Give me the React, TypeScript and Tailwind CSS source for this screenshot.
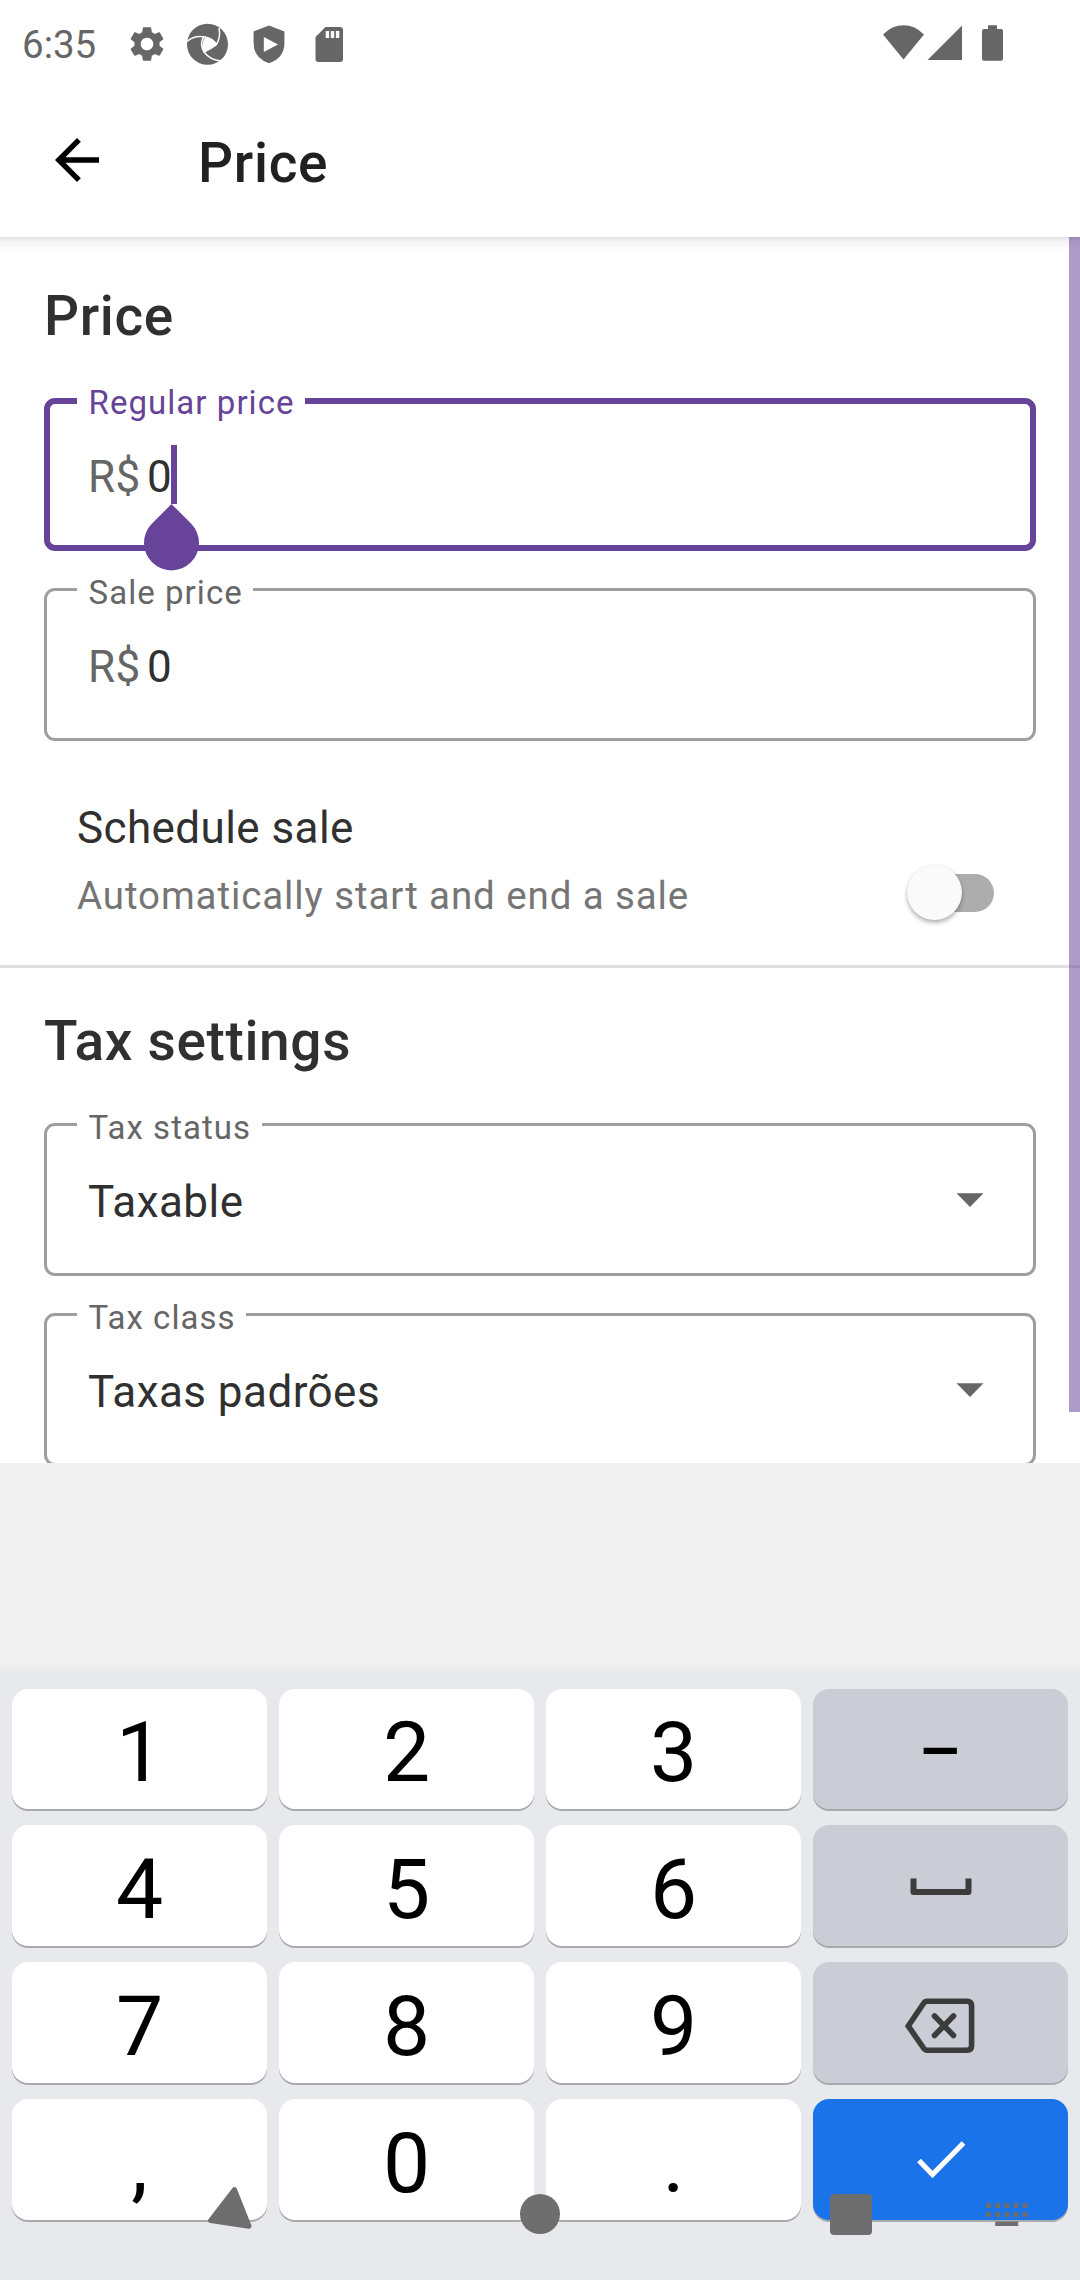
import type { ReactNode } from "react";

function StatusBar() {
  return (
    <div className="flex h-[83px] items-start justify-between pt-[22px] pl-[22px] pr-[77px] text-[#666666]">
      <div className="flex items-center">
        <span className="w-[103.5px] pt-[2px] text-[38.5px] leading-[42px]">6:35</span>
        <svg className="h-[42px] w-[42px] -mt-px" viewBox="0 0 24 24" fill="currentColor">
          <path d="M19.14 12.94c.04-.3.06-.61.06-.94 0-.32-.02-.64-.07-.94l2.03-1.58c.18-.14.23-.41.12-.61l-1.92-3.32c-.12-.22-.37-.29-.59-.22l-2.39.96c-.5-.38-1.03-.7-1.62-.94l-.36-2.54c-.04-.24-.24-.41-.48-.41h-3.84c-.24 0-.43.17-.47.41l-.36 2.54c-.59.24-1.13.57-1.62.94l-2.39-.96c-.22-.08-.47 0-.59.22L2.74 8.87c-.12.21-.08.47.12.61l2.03 1.58c-.05.3-.09.63-.09.94s.02.64.07.94l-2.03 1.58c-.18.14-.23.41-.12.61l1.92 3.32c.12.22.37.29.59.22l2.39-.96c.5.38 1.03.7 1.62.94l.36 2.54c.05.24.24.41.48.41h3.84c.24 0 .44-.17.47-.41l.36-2.54c.59-.24 1.13-.56 1.62-.94l2.39.96c.22.08.47 0 .59-.22l1.92-3.32c.12-.22.07-.47-.12-.61l-2.01-1.58zM12 15.6c-1.98 0-3.6-1.62-3.6-3.6s1.62-3.6 3.6-3.6 3.6 1.62 3.6 3.6-1.62 3.6-3.6 3.6z" />
        </svg>
        <svg className="-mt-px ml-[19.5px] h-[42px] w-[42px]" viewBox="0 0 42 42">
          <circle cx="20.5" cy="21.300" r="20.5" fill="currentColor" />
          <path d="M18 14.500Q27 14 29.500 22Q23 25 17 29Q13 22 18 14.500Z" fill="white" />
          <g fill="none" stroke="white" strokeWidth="1.5">
            <path d="M0 18.500Q7 12 18 14Q27 16 29.500 22" />
            <path d="M32 5Q34 15 29 22Q24 26 17 29" />
            <path d="M17 13.500Q12 21 17 29Q23 37 34 38" />
          </g>
        </svg>
        <svg className="-mt-px ml-[24px] h-[42px] w-[32px]" viewBox="0 0 32 42">
          <path d="M16 2.5 31.4 8.5V20Q31.4 35 16 40.3 .6 35 .6 20V8.5Z" fill="currentColor" />
          <path d="M10.8 14V29L25 21.5Z" fill="white" />
        </svg>
        <svg className="-mt-px ml-[30px] h-[42px] w-[28px]" viewBox="0 0 28 42">
          <path d="M10.5 4H25Q28 4 28 7V36Q28 39 25 39H3.5Q.5 39 .5 36V14Z" fill="currentColor" />
          <path d="M10.7 8h3.4v7h-3.4zM15.8 8h3.4v7h-3.4zM20.9 8h3.4v7h-3.4z" fill="white" />
        </svg>
      </div>
      <div className="flex h-[42px] items-center">
        <svg className="h-[42px] w-[42px]" viewBox="0 0 42 42" fill="currentColor">
          <path d="M0 12.5Q9 3.3 20.5 3.3T41 12.5L20.5 37.5Z" />
        </svg>
        <svg className="ml-[2px] h-[42px] w-[36px]" viewBox="0 0 36 42" fill="currentColor">
          <path d="M.5 38 35 3.5V38Z" />
        </svg>
        <svg className="ml-[18px] h-[42px] w-[22px]" viewBox="0 0 22 42" fill="currentColor">
          <path d="M7 3.3h9V7h4q2 0 2 2V36.800q0 2-2 2H3q-2 0-2-2V9q0-2 2-2h4z" />
        </svg>
      </div>
    </div>
  );
}

function Toolbar() {
  return (
    <header className="flex h-[154px] items-center pl-[44px]">
      <svg className="h-[66px] w-[66px]" viewBox="0 0 24 24" fill="black">
        <path d="M20,11L7.8,11l5.6,-5.6L12,4l-8,8l8,8l1.4,-1.4L7.8,13L20,13L20,11z" />
      </svg>
      <h1 className="ml-[88px] pt-[6px] text-[55px] leading-[64px] font-medium tracking-[0.69px] text-[#212121]">
        Price
      </h1>
    </header>
  );
}

function SectionTitle({ children }: { children: ReactNode }) {
  return (
    <h2 className="mx-[44px] mb-[50px] text-[55px] leading-[64px] font-medium tracking-[0.64px] text-[#303030]">
      {children}
    </h2>
  );
}

function Field({ label, focused, children }: { label: string; focused?: boolean; children: ReactNode }) {
  return (
    <div className="relative mx-[44px] h-[153px]">
      <div
        className={
          focused
            ? "absolute inset-0 rounded-[11px] border-[6px] border-[#674399]"
            : "absolute inset-0 rounded-[11px] border-[3px] border-[#9e9e9e]"
        }
      />
      <label
        className={
          focused
            ? "absolute -top-[14px] left-[33px] bg-white pr-[10.5px] pl-[11.5px] text-[33px] leading-[38px] tracking-[1.05px] text-[#674399]"
            : "absolute -top-[14px] left-[33px] bg-white pr-[10.5px] pl-[11.5px] text-[33px] leading-[38px] tracking-[1.05px] text-[#666666]"
        }
      >
        {label}
      </label>
      <div className="relative flex h-full items-center px-[44px] pt-[5px] text-[44px] leading-[52px] tracking-[0.45px] text-[#303030]">
        {children}
      </div>
    </div>
  );
}

function Amount() {
  return (
    <>
      <span className="w-[59px] text-[#666666]">R$</span>
      <span>0</span>
    </>
  );
}

function Caret() {
  return (
    <>
      <div className="absolute top-[47px] left-[127px] h-[59px] w-[6px] bg-[#674399]" />
      <svg className="absolute top-[106px] left-[100px] h-[67px] w-[56px]" viewBox="0 0 56 67" fill="#674399">
        <path d="M27.500 0 47 19.500A27.500 27.500 0 1 1 8 19.500Z" />
      </svg>
    </>
  );
}

function Dropdown({ value }: { value: string }) {
  return (
    <>
      <span className="grow">{value}</span>
      <svg className="mr-[8px] mb-[5px] h-[14px] w-[28px]" viewBox="0 0 28 14" fill="#666666">
        <path d="M.5 .3H27.500L14 14Z" />
      </svg>
    </>
  );
}

function Switch() {
  return (
    <div className="relative -mb-px h-[55px] w-[88px]">
      <div className="absolute top-[9px] right-0 h-[38px] w-[78px] rounded-full bg-[#adadad]" />
      <div className="absolute top-0 left-[0.5px] size-[55px] rounded-full bg-[#fafafa] shadow-[0_3px_4px_rgba(0,0,0,0.28),0_0_2px_rgba(0,0,0,0.1)]" />
    </div>
  );
}

const white = "bg-white text-black";
const gray = "bg-[#cbcdd6] text-black";
const blue = "bg-[#1a73e8] text-white";

function Key({ tone, children }: { tone: string; children: ReactNode }) {
  return (
    <button
      className={`flex items-center justify-center rounded-[16px] text-[84px] leading-[98px] shadow-[0_2px_0_#a9aaad] ${tone}`}
    >
      {children}
    </button>
  );
}

function Digit({ children }: { children: ReactNode }) {
  return (
    <Key tone={white}>
      <span className="pt-[8px]">{children}</span>
    </Key>
  );
}

function Keyboard() {
  return (
    <section className="relative h-[612px] bg-[#e8e9ed] pt-[21px]">
      <div className="absolute inset-x-0 -top-[4px] h-[8px] bg-linear-to-b from-[#f1f1f1] to-[#e8e9ea]" />
      <div className="grid grid-cols-4 grid-rows-[120px_121px_121px_121px] gap-x-[12px] gap-y-[16px] px-[12px]">
        <Digit>1</Digit>
        <Digit>2</Digit>
        <Digit>3</Digit>
        <Key tone={gray}>
          <span className="scale-x-81 pt-[8px]">–</span>
        </Key>
        <Digit>4</Digit>
        <Digit>5</Digit>
        <Digit>6</Digit>
        <Key tone={gray}>
          <svg className="mt-[3px] h-[18px] w-[62px]" viewBox="0 0 62 18" fill="none" stroke="#3c3c3c" strokeWidth="6" strokeLinejoin="round">
            <path d="M3.500 .5V14H58.500V.5" />
          </svg>
        </Key>
        <Digit>7</Digit>
        <Digit>8</Digit>
        <Digit>9</Digit>
        <Key tone={gray}>
          <svg className="mt-[6px] mr-[2px] h-[56px] w-[70px]" viewBox="0 0 70 56" fill="none" stroke="#3c3c3c" strokeWidth="5.600">
            <path d="M3.300 28 18.500 5.500Q20 3.300 22 3.300H62Q66.600 3.300 66.600 8V47.500Q66.600 52.200 62 52.200H22Q20 52.200 18.500 50Z" />
            <path d="M29.500 18 48.500 37.500M48.500 18 29.500 37.500" strokeLinecap="round" />
          </svg>
        </Key>
        <Digit>,</Digit>
        <Digit>0</Digit>
        <Digit>.</Digit>
        <Key tone={blue}>
          <svg className="mb-px h-[40px] w-[50px]" viewBox="0 0 50 40" fill="none" stroke="white" strokeWidth="5.200">
            <path d="M3 21.500 16.500 35.500 47.500 4" />
          </svg>
        </Key>
      </div>
      <NavigationBar />
    </section>
  );
}

function NavigationBar() {
  return (
    <nav className="absolute inset-x-0 top-[516px] flex h-[54px] items-start pl-[206.5px] text-[#6e6e6e]">
      <svg className="mt-[3px] h-[44px] w-[46px]" viewBox="0 0 46 44" fill="currentColor" stroke="currentColor" strokeWidth="5" strokeLinejoin="round">
        <path d="M27.500 2.600 3.600 33.500 42 39.200Z" />
      </svg>
      <div className="mt-[9.500px] ml-[267px] size-[40.500px] rounded-full bg-current" />
      <div className="mt-[9.500px] ml-[270px] size-[41.500px] rounded-[4px] bg-current" />
      <svg className="mt-[19px] ml-[114px] h-[24px] w-[42px]" viewBox="0 0 42 24" fill="currentColor">
        <path d="M0 0h5v5H0zM9.200 0h5v5h-5zM18.300 0h5v5h-5zM27.400 0h5v5h-5zM36.600 0h5v5h-5zM0 9h5v5H0zM9.200 9h5v5h-5zM18.300 9h5v5h-5zM27.400 9h5v5h-5zM36.600 9h5v5h-5zM9.200 18.500h23V23h-23z" />
      </svg>
    </nav>
  );
}

export default function App() {
  return (
    <div className="flex h-[2280px] w-[1080px] flex-col overflow-hidden bg-white font-['Roboto',sans-serif]">
      <StatusBar />
      <Toolbar />
      <main className="relative h-[1226px] overflow-hidden pt-[47px]">
        <SectionTitle>Price</SectionTitle>
        <div className="flex flex-col gap-[37px]">
          <div className="relative z-10">
            <Field label="Regular price" focused>
              <Amount />
              <Caret />
            </Field>
          </div>
          <Field label="Sale price">
            <Amount />
          </Field>
        </div>
        <div className="mt-[61px] flex items-end justify-between pr-[86px] pl-[77px]">
          <div>
            <p className="text-[44px] leading-[52px] tracking-[0.41px] text-[#303030]">Schedule sale</p>
            <p className="mt-[19px] text-[38.5px] leading-[46px] tracking-[0.9px] text-[#757575]">
              Automatically start and end a sale
            </p>
          </div>
          <Switch />
        </div>
        <hr className="mt-[46px] mb-[41px] h-[3px] border-0 bg-[#e0e0e0]" />
        <SectionTitle>Tax settings</SectionTitle>
        <div className="flex flex-col gap-[37px]">
          <Field label="Tax status">
            <Dropdown value="Taxable" />
          </Field>
          <Field label="Tax class">
            <Dropdown value="Taxas padrões" />
          </Field>
        </div>
        <div className="absolute top-0 right-0 h-[1175px] w-[11px] bg-[#674399]/53" />
        <div className="absolute inset-x-0 top-0 h-[15px] bg-linear-to-b from-black/12 via-black/4 via-30% to-transparent" />
      </main>
      <div className="h-[205px] bg-[#f1f1f1]" />
      <Keyboard />
    </div>
  );
}
